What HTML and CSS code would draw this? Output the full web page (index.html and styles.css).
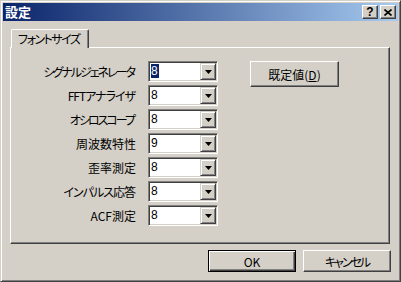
FILE: index.html
```html
<!DOCTYPE html>
<html lang="ja">
<head>
    <meta charset="UTF-8">
    <title>設定</title>
    <link rel="stylesheet" href="styles.css">
</head>
<body>

<div class="window">
    <!-- Title bar -->
    <div class="titlebar">
        <span class="title">設定</span>
        <div class="caption-buttons">
            <span class="cap-btn">?</span>
            <span class="cap-btn">
                <svg width="8" height="7" viewBox="0 0 8 7">
                    <path d="M0.5 0.5 L7.5 6.5 M7.5 0.5 L0.5 6.5" stroke="#000" stroke-width="1.6" fill="none"/>
                </svg>
            </span>
        </div>
    </div>

    <div class="client">
        <!-- Tabs -->
        <div class="tabs">
            <div class="tab selected">フォントサイズ</div>
        </div>

        <!-- Tab page -->
        <div class="panel">
            <div class="settings">
                <label class="label tighter">シグナルジェネレータ</label>
                <div class="combo"><span class="value"><span class="selected-text">8</span></span><span class="drop"><svg width="7" height="4" viewBox="0 0 7 4"><polygon points="0,0 7,0 3.5,4" fill="#000"/></svg></span></div>

                <label class="label tight">FFTアナライザ</label>
                <div class="combo"><span class="value">8</span><span class="drop"><svg width="7" height="4" viewBox="0 0 7 4"><polygon points="0,0 7,0 3.5,4" fill="#000"/></svg></span></div>

                <label class="label tighter">オシロスコープ</label>
                <div class="combo"><span class="value">8</span><span class="drop"><svg width="7" height="4" viewBox="0 0 7 4"><polygon points="0,0 7,0 3.5,4" fill="#000"/></svg></span></div>

                <label class="label">周波数特性</label>
                <div class="combo"><span class="value">9</span><span class="drop"><svg width="7" height="4" viewBox="0 0 7 4"><polygon points="0,0 7,0 3.5,4" fill="#000"/></svg></span></div>

                <label class="label">歪率測定</label>
                <div class="combo"><span class="value">8</span><span class="drop"><svg width="7" height="4" viewBox="0 0 7 4"><polygon points="0,0 7,0 3.5,4" fill="#000"/></svg></span></div>

                <label class="label tight">インパルス応答</label>
                <div class="combo"><span class="value">8</span><span class="drop"><svg width="7" height="4" viewBox="0 0 7 4"><polygon points="0,0 7,0 3.5,4" fill="#000"/></svg></span></div>

                <label class="label">ACF測定</label>
                <div class="combo"><span class="value">8</span><span class="drop"><svg width="7" height="4" viewBox="0 0 7 4"><polygon points="0,0 7,0 3.5,4" fill="#000"/></svg></span></div>
            </div>

            <button class="btn default-btn">既定値(<u>D</u>)</button>
        </div>

        <!-- Dialog buttons -->
        <div class="actions">
            <button class="btn ok">OK</button>
            <button class="btn cancel">キャンセル</button>
        </div>
    </div>
</div>

</body>
</html>
```

FILE: styles.css
```css
body {
    margin: 0;
    background-color: #d4d0c8;
    font-family: "Noto Sans CJK JP", sans-serif;
    font-size: 12px;
    font-feature-settings: "palt";
    color: #000;
}

.window {
    width: 401px;
    height: 282px;
    box-sizing: border-box;
    border: 1px solid;
    border-color: #d4d0c8 #404040 #404040 #d4d0c8;
    box-shadow: inset 1px 1px #fff, inset -1px -1px #808080;
    padding: 2px;
    background-color: #d4d0c8;
}

.titlebar {
    height: 18px;
    display: flex;
    align-items: center;
    justify-content: space-between;
    padding: 0 2px;
    background: linear-gradient(to right, #0a246a, #a6caf0);
    color: #fff;
    font-weight: bold;
}

.title {
    line-height: 18px;
    font-size: 13px;
}

.caption-buttons {
    display: flex;
    gap: 2px;
}

.cap-btn {
    box-sizing: border-box;
    width: 16px;
    height: 14px;
    display: flex;
    align-items: center;
    justify-content: center;
    background-color: #d4d0c8;
    border: 1px solid;
    border-color: #fff #404040 #404040 #fff;
    box-shadow: inset -1px -1px #808080;
    color: #000;
    font-family: "Liberation Sans", sans-serif;
    font-size: 12px;
    font-weight: bold;
    line-height: 12px;
}

.client {
    padding: 8px 8px 0 7px;
}

.tabs {
    display: flex;
    height: 18px;
}

.tab {
    position: relative;
    z-index: 1;
    box-sizing: border-box;
    width: 78px;
    height: 19px;
    margin-left: 1px;
    padding: 2px 0 0 6px;
    background-color: #d4d0c8;
    border: 1px solid;
    border-bottom: none;
    border-color: #fff #404040 #fff #fff;
    border-radius: 2px 2px 0 0;
    box-shadow: inset -1px 0 #808080;
    line-height: 14px;
    white-space: nowrap;
    letter-spacing: -1.5px;
}

.panel {
    box-sizing: border-box;
    height: 197px;
    display: flex;
    align-items: flex-start;
    padding-top: 13px;
    border: 1px solid;
    border-color: #fff #404040 #404040 #fff;
    box-shadow: inset -1px -1px #808080;
}

.settings {
    display: grid;
    grid-template-columns: 125px 70px;
    grid-auto-rows: 21px;
    column-gap: 12px;
    row-gap: 3px;
}

.label {
    text-align: right;
    line-height: 21px;
    white-space: nowrap;
}

.tight {
    letter-spacing: -1px;
    padding-right: 1px;
}

.tighter {
    letter-spacing: -2px;
    padding-right: 2px;
}

.combo {
    box-sizing: border-box;
    display: flex;
    height: 21px;
    background-color: #fff;
    border: 1px solid;
    border-color: #808080 #fff #fff #808080;
    box-shadow: inset 1px 1px #404040, inset -1px -1px #d4d0c8;
    padding: 1px;
}

.value {
    flex: 1;
    padding-left: 1px;
    font-family: "Liberation Sans", sans-serif;
    font-size: 12px;
    line-height: 17px;
}

.selected-text {
    display: inline-block;
    line-height: 14px;
    padding: 0 1px 0 0;
    background-color: #0a246a;
    color: #fff;
}

.drop {
    box-sizing: border-box;
    width: 16px;
    height: 17px;
    display: flex;
    align-items: center;
    justify-content: center;
    background-color: #d4d0c8;
    border: 1px solid;
    border-color: #d4d0c8 #404040 #404040 #d4d0c8;
    box-shadow: inset 1px 1px #fff, inset -1px -1px #808080;
}

.btn {
    box-sizing: border-box;
    width: 88px;
    height: 22px;
    padding: 0;
    font-family: inherit;
    font-size: 12px;
    font-feature-settings: "palt";
    color: #000;
    background-color: #d4d0c8;
    border: 1px solid;
    border-color: #fff #404040 #404040 #fff;
    box-shadow: inset -1px -1px #808080;
}

.default-btn {
    width: 89px;
    height: 26px;
    margin-left: 32px;
}

.ok {
    border: 1px solid #000;
    box-shadow: inset 1px 1px #fff, inset -1px -1px #404040, inset -2px -2px #808080;
}

.cancel {
    letter-spacing: -2px;
}

.actions {
    display: flex;
    justify-content: flex-end;
    gap: 7px;
    margin-top: 6px;
    margin-right: -1px;
}
```
